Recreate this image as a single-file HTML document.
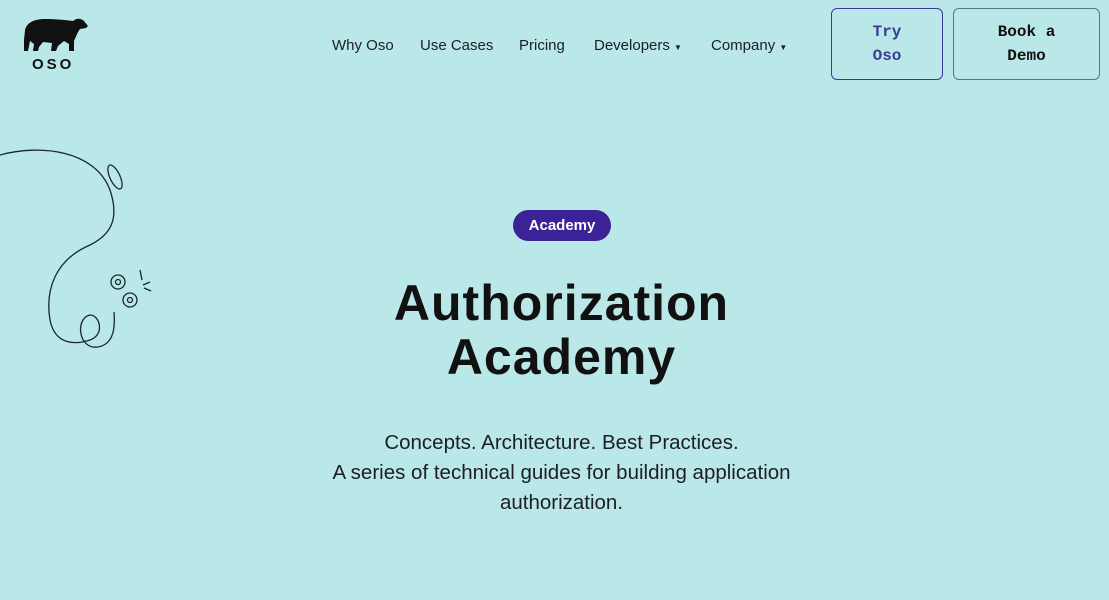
<html><head><style>
body{margin:0;width:1109px;height:600px;background:#bae8e8;font-family:"Liberation Sans",sans-serif;color:#111;position:relative;overflow:hidden}
.nav{position:absolute;top:37px;font-size:15px;color:#1c1c2a}
.btn{position:absolute;top:8px;height:72px;border-radius:6px;font-family:"Liberation Mono",monospace;font-size:16px;font-weight:bold;text-align:center;display:flex;align-items:center;justify-content:center;line-height:24px;box-sizing:border-box}
</style></head><body>
<svg style="position:absolute;left:23px;top:18px" width="66" height="34" viewBox="0 0 66 34"><path d="M2 12C4 4 12 1 22 1C32 1 42 2 50 3C53 0 58 0 61 3L65 8L63 10L57 11C54 15 53 19 51 23L51 33L46 33L46 26L41 23L35 28L33 33L28 33L29 25L20 24L16 29L15 33L10 33L11 26L7 23L5 33L1 33L1 22Z" fill="#111"/></svg>
<div style="position:absolute;left:32px;top:56px;font-size:15px;font-weight:bold;letter-spacing:3px">OSO</div>
<div class="nav" style="left:332px">Why Oso</div>
<div class="nav" style="left:420px">Use Cases</div>
<div class="nav" style="left:519px">Pricing</div>
<div class="nav" style="left:594px">Developers <span style="font-size:8px">▼</span></div>
<div class="nav" style="left:711px">Company <span style="font-size:8px">▼</span></div>
<div class="btn" style="left:831px;width:112px;border:1px solid #3b3a99;color:#3b3a99">Try<br>Oso</div>
<div class="btn" style="left:953px;width:147px;border:1px solid #4a7d7d;color:#111">Book a<br>Demo</div>
<svg style="position:absolute;left:0;top:140px" width="170" height="220" fill="none" stroke="#1a2530" stroke-width="1.3"><path d="M0 15C40 4 95 10 110 50C120 80 110 95 90 105C55 120 45 150 50 180C55 205 75 205 90 200C105 195 100 175 90 175C75 178 78 210 98 207C115 204 115 185 114 172"/><ellipse cx="115" cy="37" rx="5" ry="13" transform="rotate(-25 115 37)"/><circle cx="118" cy="142" r="7"/><circle cx="118" cy="142" r="2.5"/><circle cx="130" cy="160" r="7"/><circle cx="130" cy="160" r="2.5"/><path d="M140 130L142 140M143 145L150 142M144 148L151 151"/></svg>
<div style="position:absolute;left:513px;top:210px;width:98px;height:31px;border-radius:16px;background:#3b2296;color:#fff;font-weight:bold;font-size:15px;text-align:center;line-height:31px">Academy</div>
<div style="position:absolute;left:0;width:1123px;top:276px;text-align:center;font-size:50px;font-weight:bold;line-height:54px;letter-spacing:1px">Authorization<br>Academy</div>
<div style="position:absolute;left:0;width:1123px;top:428px;text-align:center;font-size:20.5px;line-height:30px;color:#1c1c2a">Concepts. Architecture. Best Practices.<br>A series of technical guides for building application<br>authorization.</div>
</body></html>
